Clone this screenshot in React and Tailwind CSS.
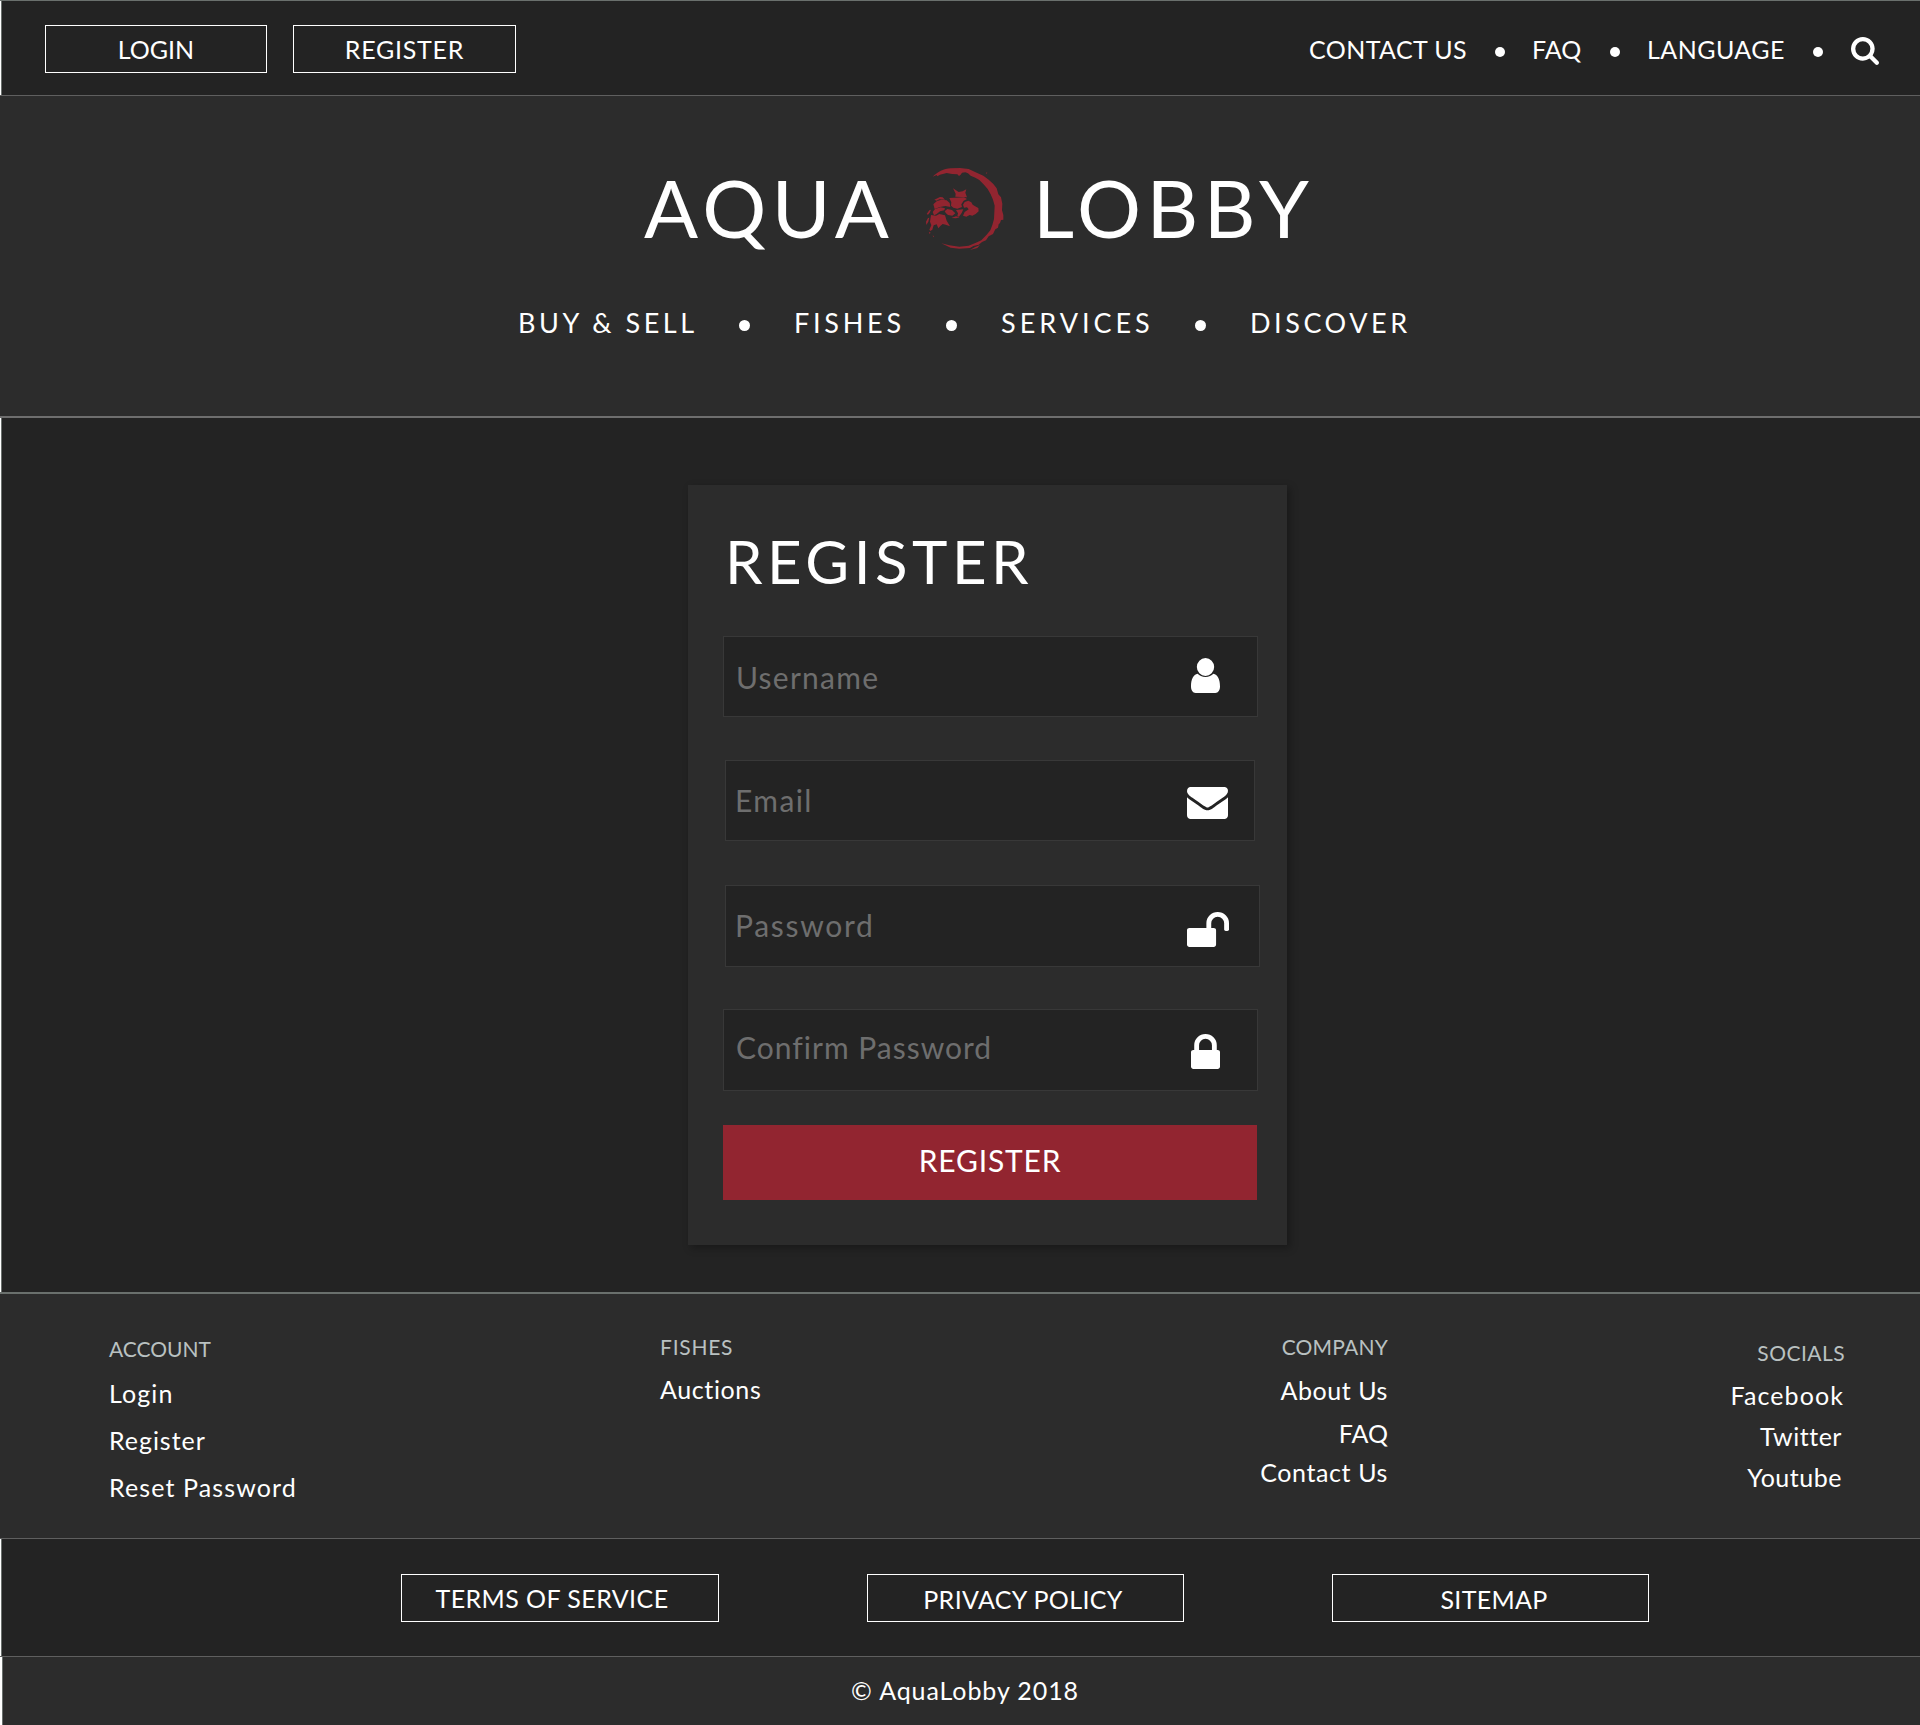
const ICONS = {
  search: {
    box: "64 128 1664 1664",
    d: "M1216 832q0-185-131.5-316.5t-316.5-131.5-316.5 131.5-131.5 316.5 131.5 316.5 316.5 131.5 316.5-131.5 131.5-316.5zm512 832q0 52-38 90t-90 38q-54 0-90-38l-343-342q-179 124-399 124-143 0-273.5-55.5t-225-150-150-225-55.5-273.5 55.5-273.5 150-225 225-150 273.5-55.5 273.5 55.5 225 150 150 225 55.5 273.5q0 220-124 399l343 343q37 37 37 90z",
  },
  mail: {
    box: "0 256 1792 1408",
    d: "M1792 710v794q0 66-47 113t-113 47h-1472q-66 0-113-47t-47-113v-794q44 49 101 87 362 246 497 345 57 42 92.5 65.5t94.5 48 110 24.5h2q51 0 110-24.5t94.5-48 92.5-65.5q170-123 498-345 57-39 100-87zm0-294q0 79-49 151t-122 123q-376 261-468 325-10 7-42.5 31t-54 38.5-52 32.5-57.5 27-50 9h-2q-23 0-50-9t-57.5-27-52-32.5-54-38.5-42.5-31q-91-64-262-182.5t-205-142.5q-62-42-117-115.5t-55-136.5q0-78 41.5-130t118.5-52h1472q65 0 112.5 47t47.5 113z",
  },
  unlock: {
    box: "64 128 1664 1408",
    d: "M1728 576v256q0 26-19 45t-45 19h-64q-26 0-45-19t-19-45v-256q0-106-75-181t-181-75-181 75-75 181v192h96q40 0 68 28t28 68v576q0 40-28 68t-68 28h-960q-40 0-68-28t-28-68v-576q0-40 28-68t68-28h672v-192q0-185 131.5-316.5t316.5-131.5 316.5 131.5 131.5 316.5z",
  },
  lock: {
    box: "320 128 1152 1408",
    d: "M640 768h512v-192q0-106-75-181t-181-75-181 75-75 181v192zm832 96v576q0 40-28 68t-68 28h-960q-40 0-68-28t-28-68v-576q0-40 28-68t68-28h32v-192q0-184 132-316t316-132 316 132 132 316v192h32q40 0 68 28t28 68z",
  },
  user: {
    box: "0 0 87 105",
    d: "M43.500 0a26 27 0 1 1 0 54a26 27 0 1 1 0-54zM20 47.500C25 53.500 34 57 43.500 57S62 53.500 67 47.500C80 49 87 65 87 85C87 97 82 105 73 105H14C5 105 0 97 0 85C0 65 7 49 20 47.500z",
  },
};

function Icon({ name, className }) {
  const icon = ICONS[name];
  return (
    <svg viewBox={icon.box} preserveAspectRatio="none" fill="currentColor" className={"shrink-0 " + className}>
      <path d={icon.d} />
    </svg>
  );
}

function KoiLogo() {
  return (
    <svg viewBox="15 6 240 252" className="mt-1 h-[84px] w-[80px] shrink-0" fill="#922530">
      <path d="M38 35C52 22 72 10 92 10L120 9L146 12L170 23L190 32L206 44L220 57L230 70L235 88L243 97L247 116L246 136L250 150L250 164L243 165L240 174L236 178L234 188L226 193L219 207L206 214L198 226L186 231L176 239L160 243L150 249L118 251L92 248L64 235L88 241L118 245L146 242L166 234L184 226L200 209L211 196L217 180L222 162L223 142L224 122L219 104L212 88L203 72L192 59L178 45L166 38L152 32L144 25L136 22L126 23L122 29L117 33L112 28L96 27L80 24L60 29L52 34L50 30z" />
      <path d="M99 70L108 76L116 81L128 79L139 73L136 83L141 97L106 95L107 86z" />
      <path d="M88 99L132 97L141 102L131 107L124 118L126 126L112 131L100 128L93 122L94 112z" />
      <path d="M134 111L145 107L154 112L158 119L168 125L175 129L176 139L167 147L157 152L149 150L139 155L129 152L134 141L146 133L141 127L132 128L129 119z" />
      <path d="M40 118L50 109L64 104L80 106L89 114L91 126L76 123L60 126L44 132z" />
      <path d="M43 104L60 96L68 97L75 104L58 103L50 107z" />
      <path d="M38 141L45 132L62 127L75 130L73 136L60 139L49 148L42 151z" />
      <path d="M74 139L82 132L96 135L106 145L97 152L84 150L78 145z" />
      <path d="M108 135L130 133L125 144L117 155L112 154L114 145z" />
      <path d="M94 159L108 154L119 157L108 160z" />
      <path d="M33 150L48 152L58 147L75 151L80 167L90 184L77 179L68 177L61 183L55 190L50 178L41 181L37 194L31 198L28 194L34 181L30 170z" />
      <path d="M20 147L28 136L33 134L29 143L24 149z" />
      <path d="M18 170L24 159L28 158L25 170L19 180z" />
      <path d="M26 200L32 203L29 207zM38 211L42 214L40 217zM150 255L164 247L180 240L172 249zM197 24L202 22L200 26z" />
    </svg>
  );
}

function OutlineButton({ children, className }) {
  return (
    <a className={"flex h-12 shrink-0 items-center justify-center border border-white whitespace-nowrap " + className}>
      {children}
    </a>
  );
}

function Field({ icon, iconClass, placeholder, className, inputClass }) {
  return (
    <label className={"flex items-center border border-[#383838] bg-[#232323] " + className}>
      <input
        placeholder={placeholder}
        className={"min-w-0 flex-1 bg-transparent text-[30px] leading-9 text-white outline-none placeholder:text-[#6e6e6e] " + inputClass}
      />
      <Icon name={icon} className={iconClass} />
    </label>
  );
}

function Heading({ children, className }) {
  return <h3 className={"text-[21px] text-[#b9c1c1] " + className}>{children}</h3>;
}

export default function App() {
  return (
    <div className="flex h-[1725px] w-[1920px] flex-col overflow-hidden bg-[#2c2c2c] font-['Lato',sans-serif] text-[25px] leading-[26px] whitespace-nowrap text-white">
      <div className="flex h-24 shrink-0 border-t border-b border-t-[#6a706d] border-b-[#5f5f5f] bg-[#232323] pt-6 shadow-[inset_1px_0_#fff,inset_2px_0_#6a706d]">
        <OutlineButton className="ml-[45px] w-[222px] pb-px">LOGIN</OutlineButton>
        <OutlineButton className="ml-[26px] w-[223px] pb-px tracking-[0.75px]">REGISTER</OutlineButton>
        <nav className="ml-[793px] flex h-12 items-center">
          <a className="w-[186px] tracking-[0.4px]">CONTACT US</a>
          <i className="mt-[6px] size-[10px] rounded-full bg-white" />
          <a className="ml-[27px] w-[78px]">FAQ</a>
          <i className="mt-[6px] size-[10px] rounded-full bg-white" />
          <a className="ml-[27px] w-[166px] tracking-[0.45px]">LANGUAGE</a>
          <i className="mt-[6px] size-[10px] rounded-full bg-white" />
          <Icon name="search" className="mt-[3px] ml-[28px] h-[28px] w-[28px]" />
        </nav>
      </div>

      <header className="h-[322px] shrink-0 border-b-2 border-[#6e6e6e] pt-[63px]">
        <h1 className="flex h-24 items-center text-[80px] leading-[96px]">
          <span className="ml-[644px] w-[281px] tracking-[5.5px]">AQUA</span>
          <KoiLogo />
          <span className="ml-[28px] tracking-[5.5px]">LOBBY</span>
        </h1>
        <nav className="mt-[52px] flex h-8 items-center text-[27px] leading-8">
          <a className="ml-[518px] w-[221px] tracking-[3.55px]">BUY &amp; SELL</a>
          <i className="mt-[5px] size-[11px] rounded-full bg-white" />
          <a className="ml-[44px] w-[152px] tracking-[3.75px]">FISHES</a>
          <i className="mt-[5px] size-[11px] rounded-full bg-white" />
          <a className="ml-[44px] w-[194px] tracking-[4px]">SERVICES</a>
          <i className="mt-[5px] size-[11px] rounded-full bg-white" />
          <a className="ml-[44px] tracking-[3.55px]">DISCOVER</a>
        </nav>
      </header>

      <main className="h-[874px] shrink-0 bg-[#232323] pt-[67px] shadow-[inset_1px_0_#fff,inset_2px_0_#6a706d]">
        <form className="ml-[688px] h-[760px] w-[599px] bg-[#2c2c2c] pt-10 shadow-[3px_3px_8px_rgba(0,0,0,0.3)]">
          <h2 className="ml-[37px] text-[60px] leading-[72px] tracking-[4.5px]">REGISTER</h2>
          <Field icon="user" iconClass="mr-[37px] mb-[2px] h-[35px] w-[29px]" placeholder="Username" className="mt-[39px] ml-[35px] h-[81px] w-[535px]" inputClass="pl-[12px] tracking-[1.25px]" />
          <Field icon="mail" iconClass="mr-[26px] mt-[5px] h-[32px] w-[41px]" placeholder="Email" className="mt-[43px] ml-[37px] h-[81px] w-[530px]" inputClass="pl-[9px] pb-[2px] tracking-[1.4px]" />
          <Field icon="unlock" iconClass="mr-[30px] mt-[7px] h-[35px] w-[42px]" placeholder="Password" className="mt-[44px] ml-[37px] h-[82px] w-[535px]" inputClass="pl-[9px] pb-[2px] tracking-[1.7px]" />
          <Field icon="lock" iconClass="mr-[37px] mt-[3px] h-[35px] w-[29px]" placeholder="Confirm Password" className="mt-[42px] ml-[35px] h-[82px] w-[535px]" inputClass="pl-[12px] pb-[7px] tracking-[1px]" />
          <button type="button" className="mt-[34px] ml-[35px] flex h-[75px] w-[534px] items-center justify-center bg-[#922530] pb-[5px] text-[30px] leading-9 tracking-[0.8px]">
            REGISTER
          </button>
        </form>
      </main>

      <footer className="shrink-0">
        <div className="flex h-[247px] border-t-2 border-b border-t-[#6a706d] border-b-[#5f5f5f]">
          <section className="ml-[109px] w-[551px] pt-[42px]">
            <Heading>ACCOUNT</Heading>
            <ul className="mt-[18px] flex flex-col gap-[21px]">
              <li className="tracking-[1.1px]">Login</li>
              <li className="tracking-[0.95px]">Register</li>
              <li className="tracking-[1.12px]">Reset Password</li>
            </ul>
          </section>
          <section className="w-[300px] pt-10">
            <Heading className="tracking-[0.75px]">FISHES</Heading>
            <p className="mt-[16px] tracking-[0.62px]">Auctions</p>
          </section>
          <section className="w-[428px] pt-10 text-right">
            <Heading className="tracking-[0.2px]">COMPANY</Heading>
            <ul className="mt-[17px]">
              <li className="tracking-[0.57px]">About Us</li>
              <li className="mt-[17px]">FAQ</li>
              <li className="mt-[13px] tracking-[0.6px]">Contact Us</li>
            </ul>
          </section>
          <section className="w-[457px] pt-[46px] text-right">
            <Heading className="tracking-[0.45px]">SOCIALS</Heading>
            <ul className="mt-[16px] flex flex-col gap-[15px] pr-px">
              <li className="tracking-[1.1px]">Facebook</li>
              <li className="pr-[2px] tracking-[0.53px]">Twitter</li>
              <li className="pr-[2px] tracking-[0.52px]">Youtube</li>
            </ul>
          </section>
        </div>
        <div className="flex h-[118px] border-b border-[#5f5f5f] bg-[#232323] pt-[35px] shadow-[inset_1px_0_#fff,inset_2px_0_#6a706d]">
          <OutlineButton className="ml-[401px] w-[318px] pr-[16px] pb-px tracking-[0.42px]">TERMS OF SERVICE</OutlineButton>
          <OutlineButton className="ml-[148px] w-[317px] pt-px pr-[5px] tracking-[0.35px]">PRIVACY POLICY</OutlineButton>
          <OutlineButton className="ml-[148px] w-[317px] pt-px pl-[7px] tracking-[0.3px]">SITEMAP</OutlineButton>
        </div>
        <p className="h-[68px] pt-5 pl-[851px] tracking-[0.9px] shadow-[inset_2px_0_#fff,inset_3px_0_#6a706d]">© AquaLobby 2018</p>
      </footer>
    </div>
  );
}
